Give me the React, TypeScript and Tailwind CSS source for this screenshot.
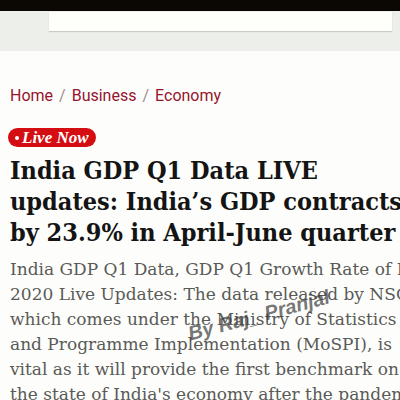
import React from "react";

const headline = [
  "India GDP Q1 Data LIVE",
  "updates: India\u2019s GDP contracts",
  "by 23.9% in April-June quarter",
];

const summary = [
  "India GDP Q1 Data, GDP Q1 Growth Rate of India",
  "2020 Live Updates: The data released by NSO,",
  "which comes under the Ministry of Statistics",
  "and Programme Implementation (MoSPI), is",
  "vital as it will provide the first benchmark on",
  "the state of India's economy after the pandemic",
];

export default function App() {
  return (
    <div className="w-[400px] h-[400px] overflow-hidden bg-[#fdfefb] relative">
      {/* status strip */}
      <div className="h-[11px] bg-[#0b0702]" />

      {/* search header */}
      <div className="h-[40px] bg-[#edefeb] pl-[49px] pr-[8px] pt-[1px]">
        <div className="h-[19px] bg-[#fefffb] shadow-[0_1px_1px_rgba(0,0,0,0.15)]" />
      </div>

      <div className="px-[10px] pt-[37px]">
        <nav
          className="flex items-center gap-[6px] text-[16px] text-[#96142e] leading-none"
          style={{ fontFamily: "Roboto, 'Liberation Sans', sans-serif" }}
        >
          <span>Home</span>
          <span className="text-[#9a8a8e]">/</span>
          <span>Business</span>
          <span className="text-[#9a8a8e]">/</span>
          <span>Economy</span>
        </nav>

        <div className="mt-[24px] inline-flex items-center gap-[3px] bg-[#d40d12] rounded-full px-[7px] h-[19px] -ml-[2px]">
          <span className="w-[4px] h-[4px] rounded-full bg-white" />
          <span
            className="text-white text-[17px] font-bold italic leading-none"
            style={{ fontFamily: "'Liberation Serif', serif" }}
          >
            Live Now
          </span>
        </div>

        <h1
          className="mt-[8px] text-[25px] leading-[31px] font-bold text-[#141414] whitespace-nowrap"
          style={{ fontFamily: "'DejaVu Serif Condensed', 'DejaVu Serif', serif", fontStretch: "condensed" }}
        >
          {headline.map((l) => (
            <div key={l}>{l}</div>
          ))}
        </h1>

        <div
          className="mt-[9px] text-[17px] leading-[25px] text-[#5a5a58] whitespace-nowrap"
          style={{ fontFamily: "'DejaVu Serif', serif" }}
        >
          {summary.map((l) => (
            <div key={l}>{l}</div>
          ))}
        </div>
      </div>

      {/* watermark */}
      <div
        className="absolute left-[186px] top-[300px] -rotate-[15deg] text-[20px] font-bold text-[#3a3a3a]/70 italic"
        style={{ fontFamily: "'Liberation Sans', sans-serif" }}
      >
        By Raj_ Pranjal
      </div>
    </div>
  );
}
